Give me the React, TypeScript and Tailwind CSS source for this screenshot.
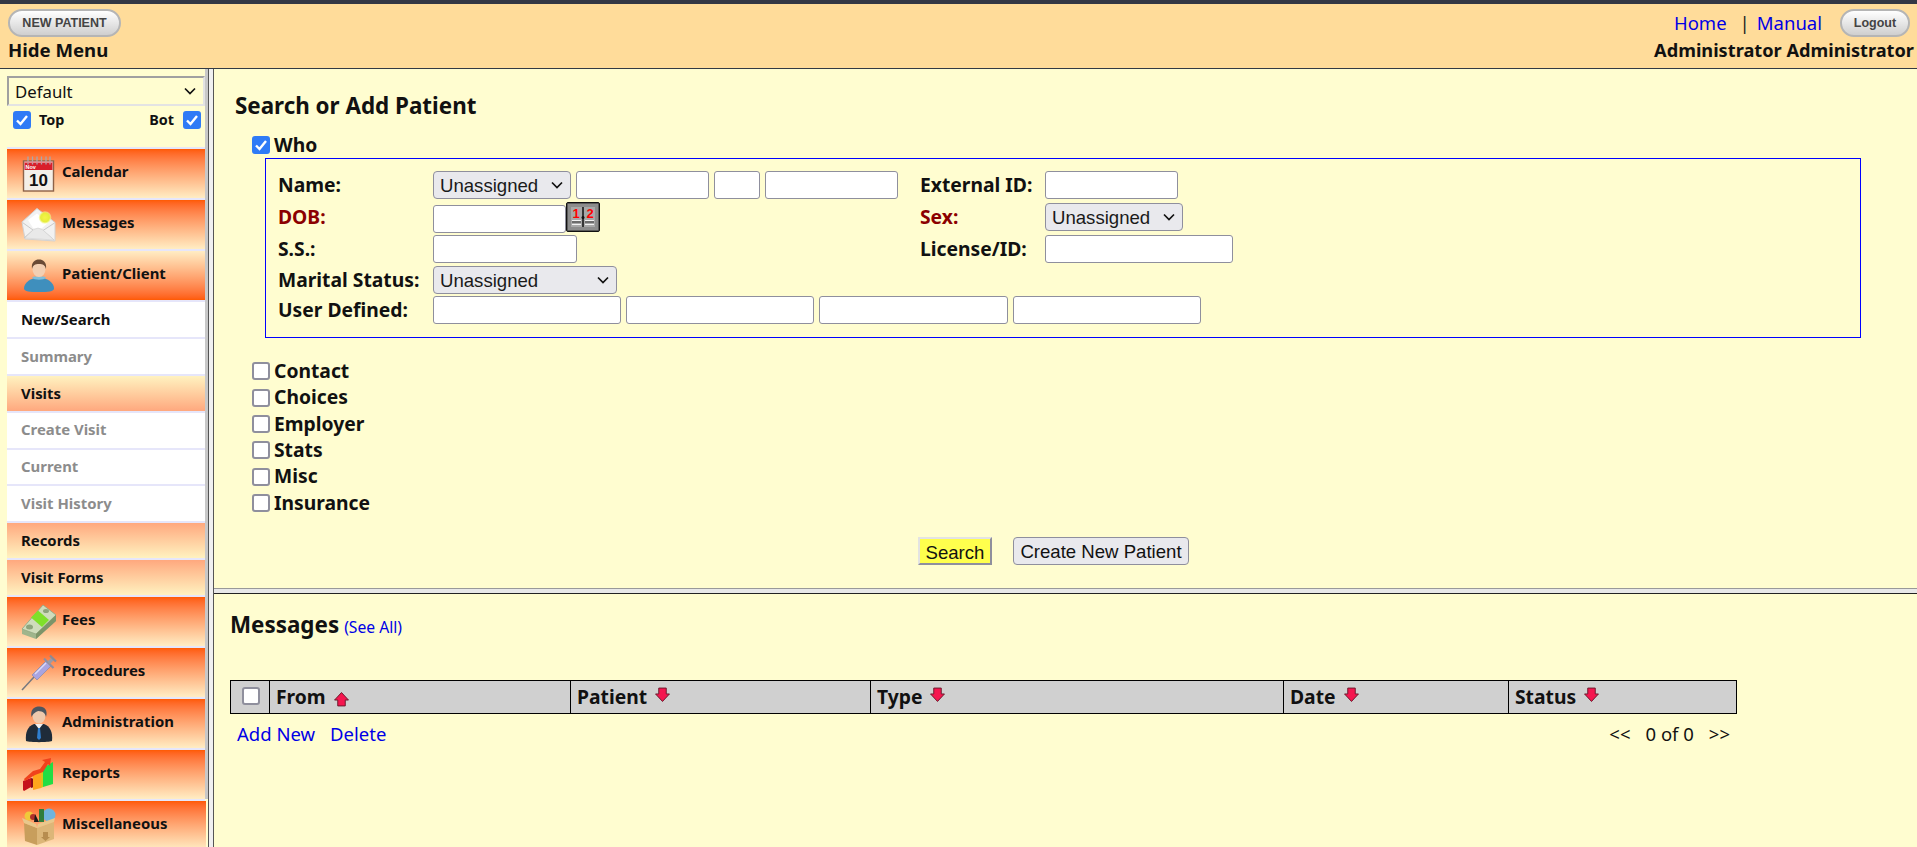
import type { ReactNode } from "react";

const mainGrad = "bg-gradient-to-b from-[#ff5a00] to-[#ffedc4]";
const subGrad = "bg-gradient-to-b from-[#ffa87e] to-[#fff2c0]";

function Check({ on = false, className = "" }: { on?: boolean; className?: string }) {
  return (
    <span className={"inline-grid shrink-0 size-[18px] " + className}>
      <input
        type="checkbox"
        defaultChecked={on}
        className={
          "col-start-1 row-start-1 size-[18px] appearance-none rounded-[3px] border-2 " +
          (on ? "border-[#2f7bf6] bg-[#2f7bf6]" : "border-[#8f8f9d] bg-white")
        }
      />
      {on && (
        <svg viewBox="0 0 18 18" className="col-start-1 row-start-1 size-[18px] pointer-events-none">
          <path d="M4 9.5l3.5 3.5L14 5" fill="none" stroke="#fff" strokeWidth="2.4" />
        </svg>
      )}
    </span>
  );
}

function Chevron({ className = "" }: { className?: string }) {
  return (
    <svg viewBox="0 0 12 8" className={"w-[12px] h-[8px] " + className}>
      <path d="M1 1.5l5 5 5-5" fill="none" stroke="#111" strokeWidth="1.7" />
    </svg>
  );
}

function Picker({ w }: { w: string }) {
  return (
    <span className={"inline-grid items-center h-[28px] " + w}>
      <select className="col-start-1 row-start-1 h-[28px] w-full appearance-none rounded-[4px] border border-[#8f8f9d] bg-[#e9e9ed] pl-[6px] text-[18.6px] text-[#1a1a1a] font-['Liberation_Sans',Arial,sans-serif]">
        <option>Unassigned</option>
      </select>
      <Chevron className="col-start-1 row-start-1 justify-self-end mr-[8px] pointer-events-none" />
    </span>
  );
}

function Field({ w, className = "" }: { w: string; className?: string }) {
  return <input type="text" className={"h-[28px] rounded-[3px] border border-[#8f8f9d] bg-white " + w + " " + className} />;
}

function CalendarIcon() {
  return (
    <svg viewBox="0 0 40 40" className="size-10 shrink-0">
      <rect x="4.5" y="7" width="30" height="30" fill="#f4efe8" stroke="#8d6248" strokeWidth="1.4" />
      <rect x="5.5" y="8" width="28" height="8" fill="#d91f2b" />
      <g stroke="#a7a7ad" strokeWidth="1.3">
        <path d="M9 2.5v8M13.5 2.5v8M18 2.5v8M22.5 2.5v8M27 2.5v8M31 2.5v8" />
      </g>
      <rect x="5.5" y="7.5" width="28" height="1.5" fill="#e9848a" />
      <text x="6.5" y="14.5" fontSize="5.5" fontWeight="700" fill="#fff" fontFamily="Liberation Sans">Nov</text>
      <text x="19.5" y="32" fontSize="17" fontWeight="700" fill="#111" textAnchor="middle" fontFamily="Liberation Sans">10</text>
    </svg>
  );
}

function EnvelopeIcon() {
  return (
    <svg viewBox="0 0 40 40" className="size-10 shrink-0">
      <defs>
        <radialGradient id="glow">
          <stop offset="0" stopColor="#f6f24a" />
          <stop offset="0.7" stopColor="#e6ee3a" />
          <stop offset="1" stopColor="#f5f7a0" stopOpacity="0.5" />
        </radialGradient>
      </defs>
      <path d="M3 17L18 3.5l18 14v18.5L6 34z" fill="#f2f2f2" stroke="#d2d2d2" />
      <path d="M3.5 17.5L14 25l-9 8M35.5 18L24 25.5 35 35" fill="none" stroke="#c9c9c9" />
      <path d="M9 15l9-6.5L30 17l-7 6H14z" fill="#fff" />
      <path d="M14 25l5-2 5 2 11 10-29-2z" fill="#e9e9e9" stroke="#d0d0d0" strokeWidth="0.6" />
      <circle cx="26" cy="12.5" r="6.3" fill="url(#glow)" />
    </svg>
  );
}

function PersonIcon() {
  return (
    <svg viewBox="0 0 40 40" className="size-10 shrink-0">
      <path d="M5 32.5c0-6 7-11 15-11s15 5 15 11c0 3-6 3.5-15 3.5S5 35.5 5 32.5z" fill="#3f8fbd" />
      <path d="M13 21.5c2 3 12 3 14 0l-2-1H15z" fill="#7fbfdc" />
      <ellipse cx="20" cy="13" rx="6.5" ry="8" fill="#f2cfb3" />
      <path d="M13 13c-1-7 3-9.5 7-9.5s8 2.5 7 9.5c-1-4-3-5-7-5s-6 1-7 5z" fill="#6a4a35" />
    </svg>
  );
}

function MoneyIcon() {
  return (
    <svg viewBox="0 0 40 40" className="size-10 shrink-0">
      <path d="M3 27l21-24 13 10v6L17 37 3 32z" fill="#9fb58c" />
      <path d="M3 27L24 3l13 10-20 19z" fill="#cfdcbc" stroke="#8ea37c" strokeWidth="0.7" />
      <path d="M17 32L37 13v6L17 37z" fill="#7d9469" />
      <path d="M12 15.5L19 8.5l11 9.5-7 7z" fill="#7fe02a" />
      <ellipse cx="10.5" cy="25" rx="3.5" ry="2.5" fill="#8ea37c" />
      <ellipse cx="27" cy="9" rx="3" ry="2" fill="#8ea37c" />
    </svg>
  );
}

function SyringeIcon() {
  return (
    <svg viewBox="0 0 40 40" className="size-10 shrink-0">
      <path d="M3 37L15 24" stroke="#77787f" strokeWidth="1.5" />
      <path d="M13 22l14-14 5 5-14 14z" fill="#a9a4e0" stroke="#8b88a8" strokeWidth="0.7" />
      <path d="M16 21L27 10" stroke="#dcdaf5" strokeWidth="1.5" />
      <path d="M25 5.5l9.5 9.5" stroke="#8f8fa0" strokeWidth="2.2" />
      <path d="M29.5 10L34 5.5" stroke="#9a9aa6" strokeWidth="3.5" />
      <path d="M31 2.5l6 6" stroke="#8a8a96" strokeWidth="2.2" />
    </svg>
  );
}

function AdminIcon() {
  return (
    <svg viewBox="0 0 40 40" className="size-10 shrink-0">
      <path d="M7 37c-1-9 2-15 8-17h10c6 2 9 8 8 17-4 1.5-22 1.5-26 0z" fill="#1f2c3a" />
      <path d="M16 20l4 5 4-5z" fill="#f0f0f0" />
      <path d="M19 24h2l1 10-2 2-2-2z" fill="#2f7fd0" />
      <ellipse cx="20" cy="11.5" rx="6.5" ry="8" fill="#eec9ad" />
      <path d="M12.5 13C11 5 15.5 2.5 20.5 2.5S29 6 27 13c-1-4-2.5-5.5-8-6-2 1-4.5 2-6.5 6z" fill="#4d5660" />
    </svg>
  );
}

function ChartIcon() {
  return (
    <svg viewBox="0 0 40 40" className="size-10 shrink-0">
      <path d="M4 26l8-3v9l-7 4-1-1z" fill="#c5101c" />
      <path d="M12 23l3 1v8l-3 1z" fill="#8d0c14" />
      <path d="M14 20l8-5v18l-8 2z" fill="#ffa51c" />
      <path d="M22 15l2 1v16l-2 1z" fill="#d9c21a" />
      <path d="M24 13l10-6v22l-10 3z" fill="#22dd44" />
      <path d="M5 24l9-8 7-2 5-7-3-2 9-2-1 8-2-2-5 8-8 3-10 6z" fill="#f0421c" />
    </svg>
  );
}

function BoxIcon() {
  return (
    <svg viewBox="0 0 40 40" className="size-10 shrink-0">
      <circle cx="30" cy="9" r="6.5" fill="#6fb4dc" />
      <circle cx="10" cy="10" r="4.5" fill="#f0c93a" />
      <circle cx="14" cy="11" r="3" fill="#b0302a" />
      <rect x="20" y="3" width="5" height="13" fill="#2f7d3a" />
      <path d="M16 8l4 8h-5z" fill="#1a1a1a" />
      <path d="M5 17l13 5v17L6 35z" fill="#c89e5c" />
      <path d="M18 22l17-6v17l-17 6z" fill="#dcb678" />
      <path d="M5 17l-2-5 14 6 1 4z" fill="#e8c88c" />
      <path d="M18 22l1-4 17-6-1 4z" fill="#e8c88c" />
      <path d="M24 26h5v5h2l-4.5 4-4.5-4h2z" fill="#b78d4f" />
    </svg>
  );
}

function Arrow({ up = false, className = "" }: { up?: boolean; className?: string }) {
  return (
    <svg viewBox="0 0 14 14" className={"inline-block size-[15px] " + className}>
      <path
        d={up ? "M7 .5l6.5 7H10.5V13h-7V7.5H.5z" : "M7 13.5L.5 6.5h3V1h7v5.5h3z"}
        fill="#f5164f"
        stroke="#6a1a2c"
        strokeWidth="0.9"
      />
    </svg>
  );
}

function MainItem({ icon, label, flip = false, wide = false }: { icon: ReactNode; label: string; flip?: boolean; wide?: boolean }) {
  return (
    <div className="h-[51px] border-t-2 border-[#e6e6fa]">
      <div
        className={
          "flex h-[49px] items-center pl-[12px] gap-[3px] text-[14.9px] font-bold text-[#111] " +
          (wide ? "w-[199px] " : "") +
          (flip ? "bg-gradient-to-b from-[#ffedc4] to-[#ff5a00]" : mainGrad)
        }
      >
        {icon}
        <span className="pb-[4px]">{label}</span>
      </div>
    </div>
  );
}

function SubItem({ label, tone }: { label: string; tone: "on" | "off" | "visits" | "head" }) {
  const look = {
    on: "bg-white text-[#111]",
    off: "bg-white text-[#8c8c8c]",
    visits: "bg-gradient-to-b from-[#fff2c0] to-[#ffa87e] text-[#111]",
    head: subGrad + " text-[#111]",
  }[tone];
  return (
    <div className="h-[36.875px] border-t-2 border-[#e6e6fa]">
      <div className={"flex h-full items-center pb-[1px] pl-[14px] text-[14.9px] font-bold " + look}>{label}</div>
    </div>
  );
}

function Sidebar() {
  return (
    <aside className="flex w-[208px] shrink-0">
      <div className="w-[205px] shrink-0 pl-[7px] pt-[7px]">
        <div className="grid h-[30px] w-[198px] items-center">
          <select className="col-start-1 row-start-1 h-[30px] w-full appearance-none border-2 border-t-[#a0a0a0] border-l-[#a0a0a0] border-b-[#e3e3e3] border-r-[#e3e3e3] bg-transparent pl-[6px] pt-[1px] text-[16.8px] text-[#111]">
            <option>Default</option>
          </select>
          <Chevron className="col-start-1 row-start-1 justify-self-end mr-[9px]" />
        </div>
        <div className="mt-[5px] flex h-[18px] w-[188px] ml-[6px] items-center text-[14.4px] font-bold text-[#111]">
          <Check on />
          <span className="ml-[8px]">Top</span>
          <span className="ml-auto mr-[9px]">Bot</span>
          <Check on />
        </div>
        <nav className="mt-[18px]">
          <MainItem icon={<CalendarIcon />} label="Calendar" />
          <MainItem icon={<EnvelopeIcon />} label="Messages" />
          <MainItem icon={<PersonIcon />} label="Patient/Client" flip />
          <SubItem label="New/Search" tone="on" />
          <SubItem label="Summary" tone="off" />
          <SubItem label="Visits" tone="visits" />
          <SubItem label="Create Visit" tone="off" />
          <SubItem label="Current" tone="off" />
          <SubItem label="Visit History" tone="off" />
          <SubItem label="Records" tone="head" />
          <SubItem label="Visit Forms" tone="head" />
          <MainItem icon={<MoneyIcon />} label="Fees" />
          <MainItem icon={<SyringeIcon />} label="Procedures" />
          <MainItem icon={<AdminIcon />} label="Administration" />
          <MainItem icon={<ChartIcon />} label="Reports" />
          <MainItem icon={<BoxIcon />} label="Miscellaneous" wide />
        </nav>
      </div>
      <div className="h-[730px] w-[3px] bg-[#c8c8c8]" />
    </aside>
  );
}

function Label({ children, red = false }: { children: ReactNode; red?: boolean }) {
  return <label className={"text-[19.3px] font-bold " + (red ? "text-[#8b0000]" : "text-[#111]")}>{children}</label>;
}

function CalendarButton() {
  return (
    <svg viewBox="0 0 34 30" className="mb-[1px] h-[30px] w-[34px] shrink-0 self-end">
      <rect x="0.5" y="0.5" width="33" height="29" rx="1.5" fill="#5a5a5a" stroke="#111" />
      <rect x="2" y="2" width="30" height="26" fill="#8c8c8c" />
      <rect x="5" y="5" width="24" height="20" fill="#a8a8a8" />
      <text x="10" y="16" fontSize="13" fontWeight="700" fill="#ff0000" textAnchor="middle" fontFamily="Liberation Sans">1</text>
      <text x="24" y="16" fontSize="13" fontWeight="700" fill="#ff0000" textAnchor="middle" fontFamily="Liberation Sans">2</text>
      <path d="M17 5v20" stroke="#111" strokeWidth="1.5" />
      <path d="M6 18.5h9M6 22.5h9M19 18.5h9M19 22.5h9" stroke="#f2f2f2" />
      <path d="M6 20h9M19 20h9" stroke="#333" />
      <circle cx="17" cy="15.5" r="1.5" fill="#111" />
    </svg>
  );
}

function SectionToggle({ label }: { label: string }) {
  return (
    <div className="flex h-[26.4px] items-center gap-[4px] pl-[17px] text-[19.3px] font-bold text-[#111]">
      <Check />
      {label}
    </div>
  );
}

function SearchPane() {
  return (
    <section className="h-[519px] shrink-0 pl-[21px] pt-[23px]">
      <h1 className="text-[22.4px] font-bold leading-[28px] text-[#111]">Search or Add Patient</h1>
      <div className="mt-[12px] flex h-[26px] items-center gap-[4px] pl-[17px] text-[19.3px] font-bold text-[#111]">
        <Check on />
        Who
      </div>
      <div className="ml-[30px] h-[180px] w-[1596px] border border-[#0000ff] pl-[12px] pt-[10px]">
        <div className="grid grid-cols-[155px_487px_125px_1fr] grid-rows-[32px_32px_32px_30px_30px] items-center">
          <Label>Name:</Label>
          <div className="flex gap-[5px]">
            <Picker w="w-[138px]" />
            <Field w="w-[133px]" />
            <Field w="w-[46px]" />
            <Field w="w-[133px]" />
          </div>
          <Label>External ID:</Label>
          <Field w="w-[133px]" />

          <Label red>DOB:</Label>
          <div className="flex h-[32px] items-end">
            <Field w="w-[133px]" />
            <CalendarButton />
          </div>
          <Label red>Sex:</Label>
          <Picker w="w-[138px]" />

          <Label>S.S.:</Label>
          <Field w="w-[144px]" />
          <Label>License/ID:</Label>
          <Field w="w-[188px]" />

          <Label>Marital Status:</Label>
          <Picker w="w-[184px]" />
          <div className="col-span-2" />

          <Label>User Defined:</Label>
          <div className="col-span-3 flex gap-[5px]">
            <Field w="w-[188.2px]" />
            <Field w="w-[188.2px]" />
            <Field w="w-[188.2px]" />
            <Field w="w-[188.2px]" />
          </div>
        </div>
      </div>
      <div className="mt-[20px]">
        <SectionToggle label="Contact" />
        <SectionToggle label="Choices" />
        <SectionToggle label="Employer" />
        <SectionToggle label="Stats" />
        <SectionToggle label="Misc" />
        <SectionToggle label="Insurance" />
      </div>
      <div className="ml-[683px] mt-[21px] flex gap-[21px] font-['Liberation_Sans',Arial,sans-serif] text-[18.6px] text-[#111]">
        <button className="h-[28px] w-[74px] border-2 border-t-[#e3e3e3] border-l-[#e3e3e3] border-b-[#8f8f9d] border-r-[#8f8f9d] bg-[#ffff4d] pb-[2px]">
          Search
        </button>
        <button className="h-[28px] w-[176px] rounded-[4px] border border-[#8f8f9d] bg-[#e9e9ed] pb-[2px]">
          Create New Patient
        </button>
      </div>
    </section>
  );
}

function MessagesPane() {
  const heads: { label: string; w: string; up?: boolean }[] = [
    { label: "From", w: "w-[301px]", up: true },
    { label: "Patient", w: "w-[300px]" },
    { label: "Type", w: "w-[413px]" },
    { label: "Date", w: "w-[225px]" },
    { label: "Status", w: "w-[228px]" },
  ];
  return (
    <section className="flex-1 pl-[16px] pt-[17px]">
      <div className="leading-[28px]">
        <span className="text-[22.4px] font-bold text-[#111]">Messages</span>
        <a className="ml-[5px] text-[15.7px] text-[#0000e6]">(See All)</a>
      </div>
      <table className="mt-[39px] w-[1506px] table-fixed border-collapse">
        <thead>
          <tr className="h-[33px] bg-[#d0d0d0] text-left text-[19.3px] text-[#111]">
            <th className="w-[39px] border border-black pl-[11px] pt-[3px] align-middle">
              <Check />
            </th>
            {heads.map((h) => (
              <th key={h.label} className={"border border-black pl-[6px] pt-[1px] font-bold " + h.w}>
                {h.label}
                <Arrow up={h.up} className={h.up ? "ml-[8px] align-[-3px]" : "ml-[8px] align-[2px]"} />
              </th>
            ))}
          </tr>
        </thead>
      </table>
      <div className="mt-[8px] flex h-[24px] w-[1507px] items-center pl-[7px] pr-[7px] text-[18.5px]">
        <a className="text-[#0000e6]">Add New</a>
        <a className="ml-[15px] text-[#0000e6]">Delete</a>
        <span className="ml-auto text-[#111]">{"<<"}</span>
        <span className="ml-[15px] text-[#111]">0 of 0</span>
        <span className="ml-[15px] text-[#111]">{">>"}</span>
      </div>
    </section>
  );
}

export default function App() {
  return (
    <div className="flex h-[847px] w-[1917px] flex-col overflow-hidden bg-[#fffdd0] font-['Noto_Sans',sans-serif]">
      <div className="h-[4px] shrink-0 bg-[#343844]" />
      <header className="flex h-[65px] shrink-0 justify-between border-b border-[#333a44] bg-[#ffdc9a] pl-[8px] pr-[3px] pt-[5px]">
        <div>
          <button className="h-[28px] w-[113px] rounded-full border-2 border-[#b5b5b5] bg-gradient-to-b from-white to-[#cfcfcf] font-['Liberation_Sans',Arial,sans-serif] text-[12.5px] font-bold text-[#444]">
            NEW PATIENT
          </button>
          <div className="text-[18.6px] font-bold leading-[26px] text-[#111]">Hide Menu</div>
        </div>
        <div className="flex flex-col items-end">
          <div className="flex h-[28px] items-center pr-[4px] text-[18.5px]">
            <a className="text-[#0000e6]">Home</a>
            <span className="ml-[13px] mr-[7px] text-[#222]">|</span>
            <a className="text-[#0000e6]">Manual</a>
            <button className="ml-[18px] h-[28px] w-[70px] rounded-full border-2 border-[#b5b5b5] bg-gradient-to-b from-white to-[#cfcfcf] font-['Liberation_Sans',Arial,sans-serif] text-[12.5px] font-bold text-[#444]">
              Logout
            </button>
          </div>
          <div className="text-[18.2px] font-bold leading-[26px] text-[#111]">Administrator Administrator</div>
        </div>
      </header>
      <div className="flex min-h-0 flex-1">
        <Sidebar />
        <div className="h-full w-[6px] shrink-0 border-x border-x-[#555] bg-[#f0f0f0]" />
        <main className="flex min-w-0 flex-1 flex-col">
          <SearchPane />
          <div className="h-[6px] shrink-0 border-t border-b border-t-[#999] border-b-[#222] bg-[#e8e8e8]" />
          <MessagesPane />
        </main>
      </div>
    </div>
  );
}
